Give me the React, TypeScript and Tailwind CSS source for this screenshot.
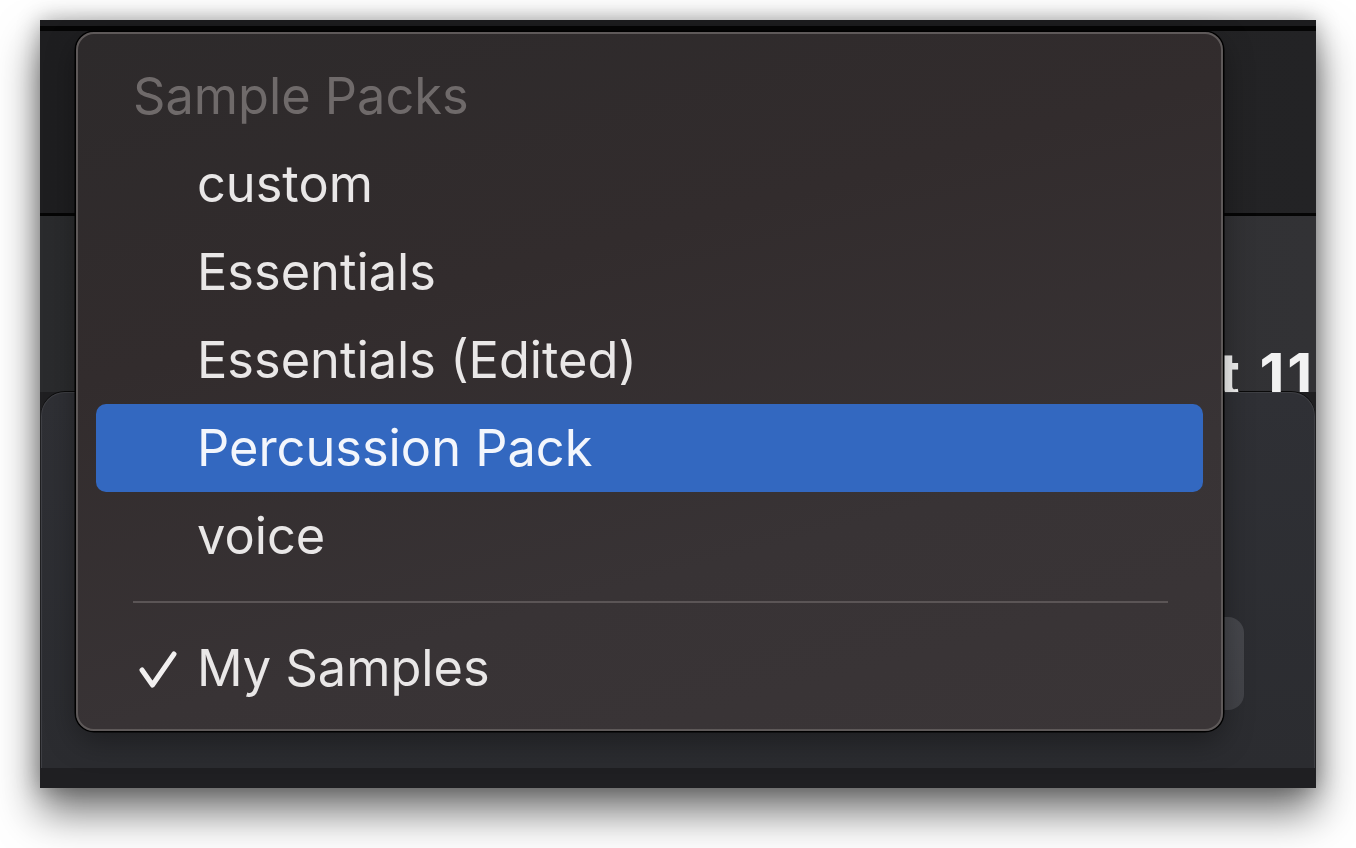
import React from "react";

const font = { fontFamily: "Inter, 'Noto Sans', 'Liberation Sans', sans-serif" };

function Check() {
  return (
    <svg width="38" height="37" viewBox="0 0 38 37" className="block">
      <polyline
        points="3,19 13.5,34 35,3"
        fill="none"
        stroke="#f2f0f0"
        strokeWidth="5"
        strokeLinecap="round"
        strokeLinejoin="round"
      />
    </svg>
  );
}

function Row({ label, active, checked }: { label: string; active?: boolean; checked?: boolean }) {
  return (
    <div
      className={
        "mx-[18px] h-[88px] flex items-center rounded-[10px] " +
        (active ? "bg-[#3368c0] text-[#f3f6fc]" : "text-[#e9e7e7]")
      }
    >
      <div className="w-[101px] shrink-0 flex items-center pl-[43px] pt-[2px]">{checked ? <Check /> : null}</div>
      <span className="text-[50.5px] leading-none whitespace-nowrap">{label}</span>
    </div>
  );
}

export default function App() {
  return (
    <div className="w-[1356px] h-[848px] bg-white overflow-hidden pt-[20px] pl-[40px]" style={font}>
      <div className="relative w-[1276px] h-[768px] flex flex-col bg-[#1f1f21] shadow-[0_24px_40px_rgba(0,0,0,0.55),0_0_22px_rgba(0,0,0,0.3)]">
        {/* title strip */}
        <div className="h-[6px] bg-[#1c1c1e]" />
        <div className="h-[5px] bg-[#050505]" />
        {/* toolbar */}
        <div className="h-[182px] bg-[linear-gradient(90deg,#1e1e20,#232325)]" />
        <div className="h-[3px] bg-[#050505]" />
        {/* header area */}
        <div className="h-[176px] bg-[linear-gradient(90deg,#2a2b2d,#323235)] flex items-end justify-end overflow-hidden">
          <span className="text-[58px] font-bold leading-none text-[#f2f2f2] whitespace-nowrap pr-[1px] translate-y-[11px] tracking-[2.8px]">
            Untitled Project 11
          </span>
        </div>
        {/* card */}
        <div className="flex-1 mx-[1px] rounded-t-[24px] border-t border-x border-[#3e3f44] bg-[linear-gradient(180deg,#2f3035,#2b2c30)] shadow-[0_-1px_0_#0a0a0a] pt-[224px]">
          <div className="ml-[60px] mr-[70px] h-[93px] rounded-[16px] bg-[linear-gradient(180deg,#46474c,#424348)]" />
        </div>
        {/* bottom strip */}
        <div className="h-[20px] bg-[#1f1f22]" />

        {/* popup menu */}
        <div className="absolute left-[36px] top-[12px] w-[1147px] rounded-[18px] border-2 border-[#5e5959] bg-[linear-gradient(165deg,#2d2a2b_0%,#322c2d_35%,#383335_70%,#3a3537_100%)] shadow-[0_0_0_1.5px_#000,0_10px_30px_rgba(0,0,0,0.35)] pt-[18px] pb-[17px]">
          <div className="h-[88px] flex items-center pl-[37px] mx-[18px]">
            <span className="text-[50.5px] leading-none text-[#6f6a6a] whitespace-nowrap">Sample Packs</span>
          </div>
          <Row label="custom" />
          <Row label="Essentials" />
          <Row label="Essentials (Edited)" />
          <Row label="Percussion Pack" active />
          <Row label="voice" />
          <div className="h-[44px] flex items-center pl-[55px] pr-[53px]">
            <div className="h-[2px] w-full bg-[#5b5556]" />
          </div>
          <Row label="My Samples" checked />
        </div>
      </div>
    </div>
  );
}
